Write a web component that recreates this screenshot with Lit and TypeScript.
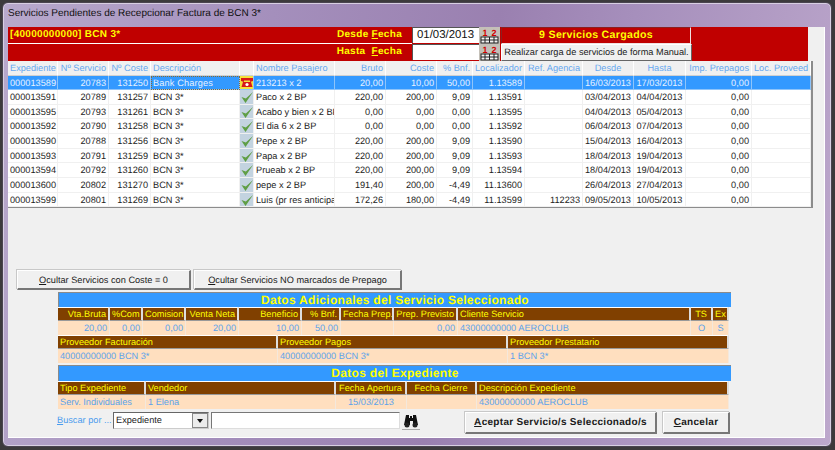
import { LitElement, html, css, svg } from 'lit';
import { customElement } from 'lit/decorators.js';

const columns = [
  ['Expediente', 'l'], ['Nº Servicio', 'r'], ['Nº Coste', 'r'], ['Descripción', 'l'], ['', 'i'],
  ['Nombre Pasajero', 'l'], ['Bruto', 'r'], ['Coste', 'r'], ['% Bnf.', 'r'], ['Localizador', 'r'],
  ['Ref. Agencia', 'r'], ['Desde', 'c'], ['Hasta', 'c'], ['Imp. Prepagos', 'r'], ['Loc. Proveed', 'l'],
];

const rows = [
  ['000013589', '20783', '131250', 'Bank Charges', 'p', '213213 x 2', '20,00', '10,00', '50,00', '1.13589', '', '16/03/2013', '17/03/2013', '0,00', ''],
  ['000013591', '20789', '131257', 'BCN 3*', 'c', 'Paco x 2 BP', '220,00', '200,00', '9,09', '1.13591', '', '03/04/2013', '04/04/2013', '0,00', ''],
  ['000013595', '20793', '131261', 'BCN 3*', 'c', 'Acabo y bien x 2 BP', '0,00', '0,00', '0,00', '1.13595', '', '04/04/2013', '05/04/2013', '0,00', ''],
  ['000013592', '20790', '131258', 'BCN 3*', 'c', 'El dia 6 x 2 BP', '0,00', '0,00', '0,00', '1.13592', '', '06/04/2013', '07/04/2013', '0,00', ''],
  ['000013590', '20788', '131256', 'BCN 3*', 'c', 'Pepe x 2 BP', '220,00', '200,00', '9,09', '1.13590', '', '15/04/2013', '16/04/2013', '0,00', ''],
  ['000013593', '20791', '131259', 'BCN 3*', 'c', 'Papa x 2 BP', '220,00', '200,00', '9,09', '1.13593', '', '18/04/2013', '19/04/2013', '0,00', ''],
  ['000013594', '20792', '131260', 'BCN 3*', 'c', 'Prueab x 2 BP', '220,00', '200,00', '9,09', '1.13594', '', '18/04/2013', '19/04/2013', '0,00', ''],
  ['000013600', '20802', '131270', 'BCN 3*', 'c', 'pepe x 2 BP', '191,40', '200,00', '-4,49', '11.13600', '', '26/04/2013', '27/04/2013', '0,00', ''],
  ['000013599', '20801', '131269', 'BCN 3*', 'c', 'Luis (pr res anticipado)', '172,26', '180,00', '-4,49', '11.13599', '112233', '09/05/2013', '10/05/2013', '0,00', ''],
];

const calendarIcon = svg`<svg viewBox="0 0 21 17" width="21" height="17">
  <rect width="21" height="17" fill="#c4c0b8" />
  <rect x="2" y="10" width="17" height="6" fill="#f4f4f4" stroke="#222" />
  <path d="M10.5 10v6M2 13h17M6 10v6M15 10v6" stroke="#222" />
  <text x="6" y="9" text-anchor="middle" font-size="9" font-weight="bold" fill="#d00000">1</text>
  <text x="15" y="9" text-anchor="middle" font-size="9" font-weight="bold" fill="#d00000">2</text>
</svg>`;

const phoneIcon = svg`<svg viewBox="0 0 14 14" width="14" height="14">
  <rect width="14" height="14" fill="#f4e23c" />
  <path d="M1 2h12v3l-3 1V4.500H4V6L1 5z" fill="#d81818" />
  <path d="M3 6h8l1.500 5h-11z" fill="#d81818" />
  <circle cx="7" cy="8.500" r="1.600" fill="#fff" />
</svg>`;

const checkIcon = svg`<svg viewBox="0 0 14 14" width="14" height="14">
  <rect width="14" height="14" fill="#c3d3e0" />
  <path d="M1.500 7l4 6L13 2 5.800 8.400z" fill="#5f9e45" />
</svg>`;

const binoculars = svg`<svg viewBox="0 0 16 14" width="16" height="14">
  <path d="M3 1h3v3h1V2h2v2h1V1h3l2 10h-5V7H7v4H1z" fill="#111" />
  <circle cx="4" cy="11" r="2.500" fill="#222" />
  <circle cx="12" cy="11" r="2.500" fill="#222" />
</svg>`;

@customElement('app-root')
export class AppRoot extends LitElement {
  static styles = css`
    :host {
      display: block;
      width: 835px;
      height: 450px;
      overflow: hidden;
      background: #3c3a3c;
      font-family: 'Liberation Sans', Arial, sans-serif;
      font-size: 9.2px;
      color: #1c1c1c;
      text-rendering: geometricPrecision;
    }
    .window {
      box-sizing: border-box;
      width: 830px;
      height: 445px;
      margin: 2px 0 0 2px;
      padding: 0 5px 6px 5px;
      border: 1px solid #4a4450;
      border-radius: 6px;
      background: linear-gradient(100deg, #b8a9cc 0%, #a48fbc 30%, #9a80b0 55%, #a68fbc 70%, #bda8cc 100%);
      box-shadow: inset 0 0 0 1px #d8cfe2;
    }
    .title {
      height: 24px;
      line-height: 22px;
      font-size: 10px;
      color: #111;
    }
    .client {
      box-sizing: border-box;
      width: 817px;
      height: 411px;
      background: #f0f0f0;
      border-bottom: 1px solid #fff;
      border-right: 1px solid #fff;
    }

    .red {
      width: 800px;
      height: 34px;
      background: #c00000;
      color: #ffff00;
      font-weight: bold;
    }
    .rrow { display: flex; height: 17px; }
    .rleft {
      box-sizing: border-box;
      display: flex;
      justify-content: space-between;
      width: 404px;
      line-height: 15px;
    }
    .rrow.top .rleft { border-bottom: 1px solid #fff; }
    .company { font-size: 10px; padding-left: 2px; letter-spacing: 0.3px; }
    .fecha { font-size: 10px; letter-spacing: 0.3px; padding-right: 10px; white-space: pre; }
    .date {
      box-sizing: border-box;
      width: 67px;
      height: 16px;
      line-height: 15px;
      background: #fff;
      color: #111;
      font-weight: normal;
      font-size: 11.4px;
      padding-left: 4px;
      border: 1px solid #555;
      border-width: 1px 0 0 1px;
    }
    .cal { height: 17px; margin-right: 1px; }
    .cal svg { display: block; }
    .cargados {
      box-sizing: border-box;
      width: 190px;
      height: 17px;
      border: 1px solid;
      border-color: #8a2020 #f0e0e0 #f0e0e0 #8a2020;
      font-size: 10.6px;
      letter-spacing: 0.3px;
      line-height: 14px;
      text-align: center;
    }
    .manual {
      box-sizing: border-box;
      width: 191px;
      height: 17px;
      background: #f0f0f0;
      color: #1a1a1a;
      font-weight: normal;
      font-size: 9.2px;
      line-height: 15px;
      text-align: center;
      border: 1px solid #fff;
      border-right-color: #666;
      border-bottom-color: #666;
      white-space: nowrap;
    }

    .grid {
      box-sizing: border-box;
      width: 805px;
      height: 147px;
      background: #fff;
      border: solid #8c8c8c;
      border-width: 0 2px 1px 0;
      overflow: hidden;
    }
    .gr {
      display: grid;
      grid-template-columns: 50px 51px 42px 89px 14px 81px 51px 51px 36px 52px 58px 51px 52px 66px 59px;
      height: 14.67px;
      line-height: 14.67px;
    }
    .gr.head { height: 14.5px; background: #f0f0f0; color: #66a8ef; line-height: 14px; }
    .gr > div {
      box-sizing: border-box;
      padding: 0 2px;
      overflow: hidden;
      white-space: nowrap;
      border-right: 1px solid #f0f0f0;
      border-bottom: 1px solid #f0f0f0;
    }
    .head > div { border-right: 1px solid #fff; border-bottom: 1px solid #d0d0d0; }
    .r { text-align: right; }
    .c { text-align: center; }
    .gr > div.i { padding: 0; }
    .i svg { display: block; }
    .gr.selected { background: #3399ff; color: #e8f2ff; }
    .gr.selected > div { border-color: #8ec4fa; }
    .gr.selected > div.focus { outline: 1px dotted #8a6a30; outline-offset: -1px; letter-spacing: 0.15px; }

    .toggles { display: flex; gap: 3px; margin: 62px 0 0 9px; height: 20px; }
    .btn {
      box-sizing: border-box;
      display: flex;
      align-items: center;
      justify-content: center;
      background: #f0f0f0;
      color: #1a1a1a;
      border: 1px solid #fff;
      border-right: 2px solid #777;
      border-bottom: 2px solid #777;
      box-shadow: -1px -1px 0 #c8c8c8;
      white-space: nowrap;
    }
    .toggles .btn { height: 20px; font-size: 9.2px; }
    .w173 { width: 174px; }
    .w208 { width: 208px; }

    .panels { margin: 2px 0 0 50px; width: 671px; }
    .bar {
      box-sizing: border-box;
      height: 15px;
      line-height: 15px;
      background: #3399ff;
      color: #ffff00;
      font-weight: bold;
      font-size: 12px;
      letter-spacing: 0.3px;
      text-align: center;
      border-top: 1px solid #8a8a8a;
      border-left: 1px solid #8a8a8a;
      margin-right: -2px;
    }
    .bar.second { height: 16px; margin-top: 2px; }
    .pr { display: grid; height: 14px; line-height: 13px; white-space: nowrap; overflow: hidden; }
    .pr > div { box-sizing: border-box; padding: 0 2px; overflow: hidden; }
    .pr.h > div {
      background: #804000;
      color: #ffff00;
      border: 1px solid #666;
      border-width: 1px 2px 1px 0;
      border-color: #fff #ddd #999 #fff;
      line-height: 12px;
    }
    .pr.v { background: #ffdfbf; color: #5ba2ea; line-height: 14px; }
    .pr.v > div { border-right: 1px solid #f4e8dc; }
    .c1 { grid-template-columns: 52px 33px 43px 53px 63px 39px 53px 64px 233px 22px 16px; }
    .c2 { grid-template-columns: 220px 230px 221px; }
    .c3 { grid-template-columns: 88px 190px 71px 70px 252px; }

    .search { display: flex; align-items: flex-start; height: 26px; margin: 3px 0 0 49px; }
    .buscar { width: 56px; color: #4b9cee; line-height: 16px; white-space: nowrap; }
    .select {
      box-sizing: border-box;
      display: flex;
      width: 96px;
      height: 17px;
      background: #fff;
      border: 1px solid #666;
      border-color: #666 #ccc #ccc #666;
      line-height: 15px;
      padding-left: 2px;
    }
    .select span { flex: 1; }
    .arrow {
      display: flex;
      align-items: center;
      justify-content: center;
      width: 14px;
      background: #ececec;
      border: 1px solid #888;
    }
    .arrow i { border: 3px solid transparent; border-top: 4px solid #111; border-bottom: 0; }
    .input {
      box-sizing: border-box;
      width: 189px;
      height: 17px;
      margin-left: 2px;
      background: #fff;
      border: 1px solid #888;
      border-color: #777 #ddd #ddd #777;
    }
    .search .find {
      width: 18px;
      height: 18px;
      margin-left: 2px;
      border-width: 0 0 1px 0;
      box-shadow: none;
      border-bottom: 1px solid #aaa;
    }
    .search .ok { width: 192px; height: 22px; margin-left: 45px; font-weight: bold; font-size: 10px; letter-spacing: 0.3px; }
    .search .no { width: 67px; height: 22px; margin-left: 6px; font-weight: bold; font-size: 10px; letter-spacing: 0.3px; }
  `;

  render() {
    return html`
      <div class="window">
        <div class="title">Servicios Pendientes de Recepcionar Factura de BCN 3*</div>
        <div class="client">
          <div class="red">
            <div class="rrow top">
              <div class="rleft">
                <div class="company">[40000000000] BCN 3*</div>
                <div class="fecha">Desde <u>F</u>echa</div>
              </div>
              <div class="date">01/03/2013</div>
              <div class="cal">${calendarIcon}</div>
              <div class="cargados">9 Servicios Cargados</div>
            </div>
            <div class="rrow">
              <div class="rleft">
                <div></div>
                <div class="fecha">Hasta  <u>F</u>echa</div>
              </div>
              <div class="date"></div>
              <div class="cal">${calendarIcon}</div>
              <div class="manual">Realizar carga de servicios de forma Manual.</div>
            </div>
          </div>
          <div class="grid">
            <div class="gr head">
              ${columns.map(([t, a]) => html`<div class=${a}>${t}</div>`)}
            </div>
            ${rows.map(
              (row, n) => html`<div class="gr ${n === 0 ? 'selected' : ''}">
                ${row.map((v, i) =>
                  i === 4
                    ? html`<div class="i">${v === 'p' ? phoneIcon : checkIcon}</div>`
                    : html`<div class="${columns[i][1]} ${n === 0 && i === 3 ? 'focus' : ''}">${v}</div>`
                )}
              </div>`
            )}
          </div>
          <div class="toggles">
            <div class="btn w173"><span><u>O</u>cultar Servicios con Coste = 0</span></div>
            <div class="btn w208"><span><u>O</u>cultar Servicios NO marcados de Prepago</span></div>
          </div>
          <div class="panels">
            <div class="bar">Datos Adicionales del Servicio Seleccionado</div>
            <div class="pr h c1">
              <div class="r">Vta.Bruta</div><div class="r">%Com</div><div class="r">Comision</div><div class="r">Venta Neta</div>
              <div class="r">Beneficio</div><div class="r">% Bnf.</div><div>Fecha Prep.</div><div class="r">Prep. Previsto</div>
              <div>Cliente Servicio</div><div class="c">TS</div><div class="c">Ex</div>
            </div>
            <div class="pr v c1">
              <div class="r">20,00</div><div class="r">0,00</div><div class="r">0,00</div><div class="r">20,00</div>
              <div class="r">10,00</div><div class="r">50,00</div><div></div><div class="r">0,00</div>
              <div>43000000000 AEROCLUB</div><div class="c">O</div><div class="c">S</div>
            </div>
            <div class="pr h c2">
              <div>Proveedor Facturación</div><div>Proveedor Pagos</div><div>Proveedor Prestatario</div>
            </div>
            <div class="pr v c2">
              <div>40000000000 BCN 3*</div><div>40000000000 BCN 3*</div><div>1 BCN 3*</div>
            </div>
            <div class="bar second">Datos del Expediente</div>
            <div class="pr h c3">
              <div>Tipo Expediente</div><div>Vendedor</div><div class="c">Fecha Apertura</div><div class="c">Fecha Cierre</div><div>Descripción Expediente</div>
            </div>
            <div class="pr v c3">
              <div>Serv. Individuales</div><div>1 Elena</div><div class="c">15/03/2013</div><div></div><div>43000000000 AEROCLUB</div>
            </div>
          </div>
          <div class="search">
            <div class="buscar"><u>B</u>uscar por ...</div>
            <div class="select"><span>Expediente</span><div class="arrow"><i></i></div></div>
            <div class="input"></div>
            <div class="btn find">${binoculars}</div>
            <div class="btn ok"><span><u>A</u>ceptar Servicio/s Seleccionado/s</span></div>
            <div class="btn no"><span><u>C</u>ancelar</span></div>
          </div>
        </div>
      </div>
    `;
  }
}
